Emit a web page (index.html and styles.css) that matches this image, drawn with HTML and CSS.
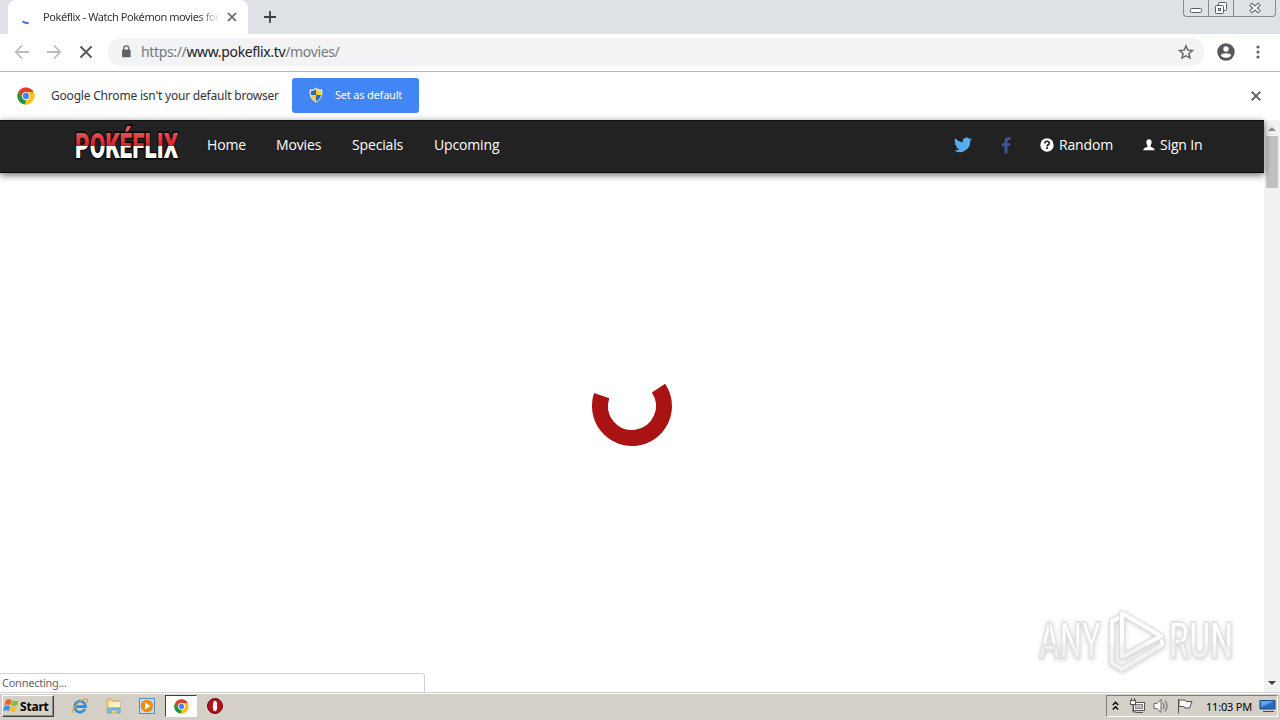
FILE: index.html
```html
<!DOCTYPE html>
<html lang="en">
<head>
  <meta charset="UTF-8">
  <meta name="viewport" content="width=device-width, initial-scale=1.0">
  <title>Pokéflix - Watch Pokémon movies for free</title>
  <link rel="stylesheet" href="styles.css">
</head>
<body>

  <!-- shared browser logo -->
  <svg class="defs" width="0" height="0">
    <symbol id="chrome" viewBox="0 0 48 48">
      <circle cx="24" cy="24" r="23" fill="#fbc116"/>
      <path d="M4 12.5A23 23 0 0 1 44 13H24L14 30Z" fill="#e33b2e"/>
      <path d="M4 12.5 14.5 30 24 35 21 46.8A23 23 0 0 1 4 12.5Z" fill="#229342"/>
      <circle cx="24" cy="24" r="11" fill="#fff"/>
      <circle cx="24" cy="24" r="8.5" fill="#4285f4"/>
    </symbol>
  </svg>

  <div class="tab-strip">
    <div class="tab">
      <svg class="tab-spinner" width="16" height="16" viewBox="0 0 16 16"><path d="M3.400 7.200Q5.800 9.200 9.700 9.300" fill="none" stroke="#3b7ae8" stroke-width="2"/></svg>
      <span class="tab-title">Pokéflix - Watch Pokémon movies for</span>
      <svg class="tab-close" width="10" height="10" viewBox="0 0 10 10"><path d="M1 1l8 8M9 1l-8 8" stroke="#5f6368" stroke-width="1.7"/></svg>
    </div>
    <svg class="new-tab" width="12" height="12" viewBox="0 0 12 12"><path d="M6 0v12M0 6h12" stroke="#3c4043" stroke-width="1.8"/></svg>
    <div class="window-btns">
      <div class="win-btn min"><svg width="14" height="16" viewBox="0 0 14 16"><rect x="1.500" y="8.500" width="11" height="4" rx="1" fill="#fff" stroke="#5a5d68"/></svg></div>
      <div class="win-btn max"><svg width="14" height="16" viewBox="0 0 14 16"><g fill="#fff" stroke="#5a5d68"><rect x="4.500" y="2.500" width="8" height="8" rx="1"/><rect x="1.500" y="5.500" width="8" height="8" rx="1"/><rect x="4.500" y="8.500" width="2" height="2"/></g></svg></div>
      <div class="win-btn close"><svg width="14" height="16" viewBox="0 0 14 16"><path d="M2.500 4l9 8M11.500 4l-9 8" stroke="#5a5d68" stroke-width="4"/><path d="M3 4.500l8 7M11 4.500l-8 7" stroke="#fff" stroke-width="2"/></svg></div>
    </div>
  </div>

  <div class="toolbar">
    <svg class="tool" width="16" height="16" viewBox="0 0 16 16"><path d="M15 8H2M8 1.500L1.800 8 8 14.500" fill="none" stroke="#b9bbbe" stroke-width="1.800"/></svg>
    <svg class="tool" width="16" height="16" viewBox="0 0 16 16"><path d="M1 8h13M8 1.500L14.200 8 8 14.500" fill="none" stroke="#b9bbbe" stroke-width="1.800"/></svg>
    <svg class="tool" width="16" height="16" viewBox="0 0 16 16"><path d="M2.500 2.500l11 11M13.500 2.500l-11 11" stroke="#55585c" stroke-width="1.900"/></svg>
    <div class="address">
      <svg width="10" height="13" viewBox="0 0 10 13"><rect x="1" y="4.500" width="8.600" height="7.700" rx="1" fill="#5f6368"/><path d="M2.800 5V3.300a2.400 2.400 0 0 1 4.900 0V5" fill="none" stroke="#5f6368" stroke-width="1.300"/></svg>
      <span class="url">https://<b>www.pokeflix.tv</b>/movies/</span>
      <svg class="star" width="16" height="16" viewBox="0 0 16 16"><path d="M8 1.800l1.800 4.300 4.700.4-3.600 3 1.100 4.600L8 11.700l-4 2.400 1.100-4.600-3.600-3 4.700-.4z" fill="none" stroke="#5f6368" stroke-width="1.400"/></svg>
    </div>
    <svg class="profile" width="18" height="18" viewBox="0 0 18 18"><circle cx="9" cy="9" r="8.700" fill="#55585c"/><circle cx="9" cy="6" r="2.700" fill="#fff"/><path d="M3.800 12.200C4 9.500 14 9.500 14.200 12.200 12 15.700 6 15.700 3.800 12.200Z" fill="#fff"/></svg>
    <svg class="menu" width="4" height="14" viewBox="0 0 4 14"><g fill="#5f6368"><circle cx="2" cy="2" r="1.600"/><circle cx="2" cy="7" r="1.600"/><circle cx="2" cy="12" r="1.600"/></g></svg>
  </div>

  <div class="infobar">
    <svg width="18" height="18"><use href="#chrome"/></svg>
    <span class="info-text">Google Chrome isn't your default browser</span>
    <div class="default-btn">
      <svg width="14" height="16" viewBox="0 0 14 16">
        <path d="M7 1C5 2.700 3 3 1 2.800 .6 9 2.500 13 7 15.200 11.500 13 13.400 9 13 2.800 11 3 9 2.700 7 1Z" fill="#e9edf2" stroke="#d5d9d0"/>
        <path d="M7 2.200C5.500 3.400 4 4 2 4V8H7Z" fill="#2c68c0"/><path d="M7 2.200C8.500 3.400 10 4 12 4V8H7Z" fill="#f7cf28"/>
        <path d="M2 8C2.500 11 4 13 7 14.300V8Z" fill="#f7cf28"/><path d="M12 8C11.500 11 10 13 7 14.300V8Z" fill="#2c68c0"/>
      </svg>
      <span>Set as default</span>
    </div>
    <svg class="info-close" width="10" height="10" viewBox="0 0 10 10"><path d="M.7.7l8.600 8.600M9.300.7L.7 9.300" stroke="#666a6e" stroke-width="2"/></svg>
  </div>

  <div class="viewport">
    <div class="page">
      <div class="navbar">
        <svg class="brand" width="108" height="38" viewBox="0 0 108 38">
          <defs>
            <linearGradient id="brandFill" gradientUnits="userSpaceOnUse" x1="0" y1="-20" x2="0" y2="0">
              <stop offset="0" stop-color="#ec5a60"/><stop offset=".56" stop-color="#d1222b"/>
              <stop offset=".56" stop-color="#fff"/><stop offset="1" stop-color="#fff"/>
            </linearGradient>
          </defs>
          <text class="brand-text" transform="translate(2 34) scale(1 1.400)" textLength="103" lengthAdjust="spacingAndGlyphs">POKÉFLIX</text>
        </svg>
        <span class="link home">Home</span>
        <span class="link movies">Movies</span>
        <span class="link specials">Specials</span>
        <span class="link upcoming">Upcoming</span>
        <div class="nav-right">
          <svg class="twitter" width="18" height="16" viewBox="0 0 24 20"><path d="M24 2.400c-.9.400-1.800.7-2.800.8 1-.6 1.800-1.600 2.200-2.700-1 .6-2 1-3.100 1.200A4.900 4.900 0 0 0 11.900 6.200C7.800 6 4.200 4 1.700 1a4.900 4.900 0 0 0 1.500 6.600c-.8 0-1.600-.3-2.200-.6 0 2.400 1.600 4.400 3.900 4.900-.7.200-1.500.2-2.200.1.600 2 2.400 3.400 4.600 3.400A10 10 0 0 1 0 17.400 14 14 0 0 0 21.500 5c1-.7 1.800-1.600 2.500-2.600z" fill="#55acee"/></svg>
          <svg class="facebook" width="10" height="17" viewBox="0 0 10 17"><path d="M9.500.3V3H7.900C6.700 3 6.500 3.600 6.500 4.400V6.200H9.400L9 9.100H6.500V16.500H3.500V9.100H1V6.200H3.500V4C3.500 1.500 5 .2 7.300.2Z" fill="#3f549b"/></svg>
          <svg class="random-icon" width="14" height="14" viewBox="0 0 14 14"><circle cx="7" cy="7" r="6.700" fill="#fff"/><path d="M4.800 5.400C4.800 2.600 9.300 2.600 9.300 5.200 9.300 6.800 7.100 6.800 7.100 8.400" fill="none" stroke="#222" stroke-width="1.700"/><path d="M6.200 9.300h1.800v1.700H6.200z" fill="#222"/></svg>
          <span class="link random">Random</span>
          <svg class="user-icon" width="12" height="12" viewBox="0 0 12 12"><path d="M6 .3C3.900.3 3.200 1.700 3.400 3.500 3.500 5.200 4.300 6 4.500 6.700V7.700C3 8.500.5 8.700.3 11.300H11.700C11.500 8.700 9 8.500 7.500 7.700V6.700C7.700 6 8.500 5.200 8.600 3.500 8.800 1.700 8.100.3 6 .3Z" fill="#fff"/></svg>
          <span class="link signin">Sign In</span>
        </div>
      </div>

      <div class="loading">
        <svg width="80" height="80" viewBox="0 0 80 80"><path d="M66.500 22.100A32 32 0 1 1 9.700 29.600" fill="none" stroke="#a91313" stroke-width="16"/></svg>
      </div>

      <div class="status">Connecting...</div>

      <svg class="watermark" width="210" height="76" viewBox="0 0 210 76">
        <defs>
          <linearGradient id="fade" gradientUnits="userSpaceOnUse" x1="0" y1="8" x2="0" y2="70">
            <stop offset="0" stop-color="#fff"/><stop offset=".5" stop-color="#fff"/>
            <stop offset=".6" stop-color="#f2f2f2"/><stop offset="1" stop-color="#f2f2f2"/>
          </linearGradient>
        </defs>
        <g class="mark">
          <text x="8" y="56" textLength="62" lengthAdjust="spacingAndGlyphs">ANY</text>
          <text x="138" y="56" textLength="64" lengthAdjust="spacingAndGlyphs">RUN</text>
          <path class="edge" d="M87 16L81 19V61L91 67 131 43V39"/>
          <path class="line" d="M87 16L81 19V61L91 67 131 43V39"/>
          <path class="edge" d="M91 11V55L130 34Z"/>
          <path class="line" d="M91 11V55L130 34Z"/>
        </g>
      </svg>
    </div>
    <div class="scrollbar">
      <svg width="8" height="4" viewBox="0 0 8 4"><path d="M0 4L4 0 8 4Z" fill="#8e8e8e"/></svg>
      <div class="thumb"></div>
      <svg class="down" width="8" height="4" viewBox="0 0 8 4"><path d="M0 0L4 4 8 0Z" fill="#404040"/></svg>
    </div>
  </div>

  <div class="taskbar">
    <div class="start">
      <svg width="17" height="16" viewBox="0 0 17 16"><path d="M3 2Q6 .5 8.500 2L7.300 7Q4.500 5.800 1.600 7Z" fill="#e8602c"/><path d="M9.300 2.500Q12 3.800 15.500 2.200L14 7.300Q11 8.500 8 7.300Z" fill="#83b83f"/><path d="M1.400 8Q4.500 6.800 7 8L5.800 13Q3.200 11.500 0 13Z" fill="#3f8fdc"/><path d="M7.800 8.300Q10.800 9.500 13.800 8.300L12.400 13.500Q9.500 15 6.500 13.300Z" fill="#f4bd2a"/></svg>
      <span>Start</span>
    </div>
    <div class="quick">
      <svg width="18" height="18" viewBox="0 0 18 18"><path d="M14 12.200A5.500 5.500 0 1 1 14.600 9.600H5" fill="none" stroke="#2f8fdb" stroke-width="2.600"/><path d="M2 15.800C-1 13 11 .5 16 2.300 17 2.800 16.500 4.500 15.500 6" fill="none" stroke="#d5aa36" stroke-width="1.300"/></svg>
    </div>
    <div class="quick">
      <svg width="18" height="18" viewBox="0 0 18 18"><path d="M2 2h5l1 2h7v12H2z" fill="#efd680" stroke="#cfb35b"/><path d="M4 5h11v5H4z" fill="#fff3bd"/><path d="M3 16v-5h12v5h-3v-3H6v3z" fill="#7ac1e6" stroke="#4c9dcc" stroke-width=".7"/></svg>
    </div>
    <div class="quick">
      <svg width="18" height="18" viewBox="0 0 18 18"><rect x="1.500" y="1.500" width="15" height="15" fill="#c2def2" stroke="#4e91c4"/><circle cx="9" cy="9" r="6.200" fill="#ee8a18"/><path d="M7 5.500L12.500 9 7 12.500Z" fill="#fff"/></svg>
    </div>
    <div class="quick active"><svg width="15" height="15"><use href="#chrome"/></svg></div>
    <div class="quick">
      <svg width="16" height="16" viewBox="0 0 16 16"><circle cx="8" cy="8" r="7.500" fill="#b20f18" stroke="#65090d"/><ellipse cx="8" cy="8" rx="2.200" ry="5.300" fill="#fff"/></svg>
    </div>
    <div class="tray">
      <svg class="chevrons" width="7" height="10" viewBox="0 0 7 10"><path d="M.8 4L3.500 1.300 6.200 4M.8 8.500L3.500 5.800 6.200 8.500" fill="none" stroke="#000" stroke-width="1.400"/></svg>
      <svg class="network" width="16" height="16" viewBox="0 0 16 16"><rect x="4.500" y="4.500" width="11" height="8" fill="#fff" stroke="#555"/><rect x="6.500" y="6.500" width="7" height="4" fill="#bcbcbc" stroke="#888"/><path d="M7 14.500h7" stroke="#555"/><rect x="1.500" y="2.500" width="5" height="4" fill="#fff" stroke="#555"/><path d="M2.500 0v2M5.500 0v2M4 7v7h3" fill="none" stroke="#555"/></svg>
      <svg class="sound" width="16" height="16" viewBox="0 0 16 16"><path d="M1 5.500H4L8 1.500V14.500L4 10.500H1Z" fill="#fff" stroke="#666"/><path d="M10 5Q12 8 10 11M12 2.500Q16 8 12 13.500" fill="none" stroke="#777" stroke-width="1.200"/></svg>
      <svg class="flag" width="16" height="16" viewBox="0 0 16 16"><path d="M1.500 15.500V1M2 2H8L9 3.500H15L12.500 10H8L7 8.500H2Z" fill="#fff" stroke="#555"/></svg>
      <span class="clock">11:03 PM</span>
      <svg class="desktop" width="17" height="14" viewBox="0 0 17 14"><path d="M1 1.500H16V10H1Z" fill="#276bc2" stroke="#184885"/><path d="M2 2H15L2 8Z" fill="#67a3e4"/><path d="M4 12.500H15" stroke="#424f63"/></svg>
    </div>
  </div>

</body>
</html>
```
FILE: styles.css
```css
* {
  box-sizing: border-box;
}
body {
  margin: 0;
  width: 1280px;
  height: 720px;
  overflow: hidden;
  display: flex;
  flex-direction: column;
  background: #fff;
  font-family: "Noto Sans", sans-serif;
  color: #333;
}
svg {
  display: block;
  flex-shrink: 0;
  overflow: visible;
}
.defs {
  position: absolute;
}
span {
  white-space: nowrap;
}

/* browser frame */
.tab-strip {
  height: 34px;
  display: flex;
  align-items: center;
  background: #dee1e6;
  padding-left: 8px;
}
.tab {
  width: 240px;
  height: 34px;
  display: flex;
  align-items: center;
  background: #fff;
  border-radius: 8px 8px 0 0;
  padding-left: 11px;
}
.tab-spinner {
  margin-top: 9px;
}
.tab-title {
  width: 176px;
  margin-left: 8px;
  margin-bottom: 2px;
  overflow: hidden;
  font-size: 11px;
  letter-spacing: -0.43px;
  -webkit-mask-image: linear-gradient(to right, #000 155px, transparent 177px);
  mask-image: linear-gradient(to right, #000 155px, transparent 177px);
}
.tab-close {
  margin-left: 8px;
}
.new-tab {
  margin-left: 16px;
}
.window-btns {
  display: flex;
  align-self: flex-start;
  height: 17px;
  margin-left: auto;
  margin-right: 4px;
  border: 1px solid #868993;
  border-top: none;
  border-radius: 0 0 4px 4px;
}
.win-btn {
  display: flex;
  justify-content: center;
  width: 24px;
}
.win-btn.max {
  width: 26px;
  border-left: 1px solid #868993;
  border-right: 1px solid #868993;
}
.win-btn.close {
  width: 41px;
}
.toolbar {
  height: 38px;
  display: flex;
  align-items: center;
  padding: 0 20px 2px 14px;
  border-bottom: 1px solid #b4b6b9;
}
.tool {
  margin-right: 16px;
}
.address {
  width: 1096px;
  height: 28px;
  display: flex;
  align-items: center;
  margin-left: -2px;
  padding: 0 10px 0 13px;
  border-radius: 14px;
  background: #f1f3f4;
}
.url {
  margin-left: 10px;
  font-size: 14px;
  letter-spacing: -0.35px;
  color: #75797d;
}
.url b {
  font-weight: normal;
  color: #202124;
}
.star {
  margin-left: auto;
}
.profile {
  margin-left: 13px;
}
.menu {
  margin-left: auto;
}
.infobar {
  height: 48px;
  display: flex;
  align-items: center;
  padding: 0 19px 0 17px;
}
.info-text {
  width: 241px;
  margin-left: 16px;
  margin-bottom: 2px;
  font-size: 12px;
  letter-spacing: -0.2px;
}
.default-btn {
  width: 127px;
  height: 35px;
  display: flex;
  align-items: center;
  margin-bottom: 2px;
  padding-left: 17px;
  border-radius: 3px;
  background: #4285f4;
  color: #fff;
  font-size: 11px;
  letter-spacing: -0.2px;
}
.default-btn span {
  margin-left: 12px;
  margin-bottom: 1px;
}
.info-close {
  margin-left: auto;
}

/* web page */
.viewport {
  height: 572px;
  display: flex;
}
.page {
  position: relative;
  width: 1264px;
  display: flex;
  flex-direction: column;
}
.navbar {
  height: 53px;
  display: flex;
  align-items: center;
  padding: 0 62px 3px 73px;
  background: #222;
  border-top: 1px solid #111;
  border-bottom: 1px solid #080808;
  box-shadow: 0 2px 7px rgba(0, 0, 0, 0.6);
}
.brand {
  margin-top: -4px;
}
.brand-text {
  font-family: "Roboto", sans-serif;
  font-size: 25px;
  font-weight: 900;
  fill: url(#brandFill);
  stroke: #050505;
  stroke-width: 2px;
  paint-order: stroke;
}
.link {
  margin-bottom: 2px;
  font-family: "Open Sans", sans-serif;
  font-size: 14px;
  letter-spacing: -0.15px;
  color: #fff;
}
.home {
  width: 69px;
  margin-left: 26px;
}
.movies {
  width: 76px;
}
.specials {
  width: 82px;
}
.nav-right {
  display: flex;
  align-items: center;
  margin-left: auto;
}
.facebook {
  margin-left: 29px;
}
.random-icon {
  margin-left: 29px;
}
.random {
  width: 84px;
  margin-left: 5px;
}
.signin {
  width: 42px;
  margin-left: 5px;
}
.loading {
  height: 80px;
  display: flex;
  justify-content: center;
  margin-top: 193px;
}
.status {
  width: 425px;
  height: 19px;
  margin-top: auto;
  padding-left: 2px;
  border: 1px solid #d2d2d2;
  border-left: none;
  border-bottom: none;
  border-radius: 0 3px 0 0;
  font-size: 11px;
  line-height: 17px;
  letter-spacing: -0.25px;
  color: #666;
}
.watermark {
  position: absolute;
  right: 23px;
  bottom: 14px;
}
.mark {
  font-family: "Roboto", sans-serif;
  font-size: 50px;
  font-weight: 500;
  fill: url(#fade);
  stroke: #e0e0e0;
  stroke-width: 1.3px;
  filter: drop-shadow(0 1px 2px rgba(0, 0, 0, 0.2));
}
.mark path {
  fill: none;
  stroke-linejoin: round;
  stroke-linecap: round;
}
.mark .edge {
  stroke: #dedede;
  stroke-width: 6px;
}
.mark .line {
  stroke: url(#fade);
  stroke-width: 4px;
}
.scrollbar {
  width: 16px;
  display: flex;
  flex-direction: column;
  align-items: center;
  padding: 7px 0;
  background: #f1f1f1;
}
.thumb {
  width: 12px;
  height: 52px;
  margin-top: 5px;
  background: #c1c1c1;
}
.down {
  margin-top: auto;
}

/* taskbar */
.taskbar {
  height: 28px;
  display: flex;
  align-items: center;
  background: #d4d0c8;
  border-top: 1px solid #d4d0c8;
  box-shadow: inset 0 1px #fff;
  padding: 1px 2px 2px;
}
.start {
  width: 52px;
  height: 22px;
  display: flex;
  align-items: center;
  margin-right: 10px;
  border: 1px solid;
  border-color: #fff #404040 #404040 #fff;
  box-shadow: inset -1px -1px #888;
  font-size: 12px;
  font-weight: bold;
  letter-spacing: -0.2px;
  color: #000;
}
.quick {
  width: 32px;
  height: 22px;
  display: flex;
  align-items: center;
  justify-content: center;
  margin-right: 1.7px;
}
.active {
  background: #fff;
  border: 1px solid;
  border-color: #404040 #fff #fff #404040;
}
.tray {
  width: 172px;
  height: 22px;
  display: flex;
  align-items: center;
  margin-left: auto;
  padding-left: 5px;
  border: 1px solid;
  border-color: #808080 #fff #fff #808080;
  color: #000;
  font-size: 11px;
  letter-spacing: -0.2px;
}
.network {
  margin-left: 10px;
}
.sound {
  margin-left: 8px;
}
.flag {
  margin-left: 8px;
}
.clock {
  width: 46px;
  margin-left: 13px;
}
.desktop {
  margin-left: 7px;
}
```
